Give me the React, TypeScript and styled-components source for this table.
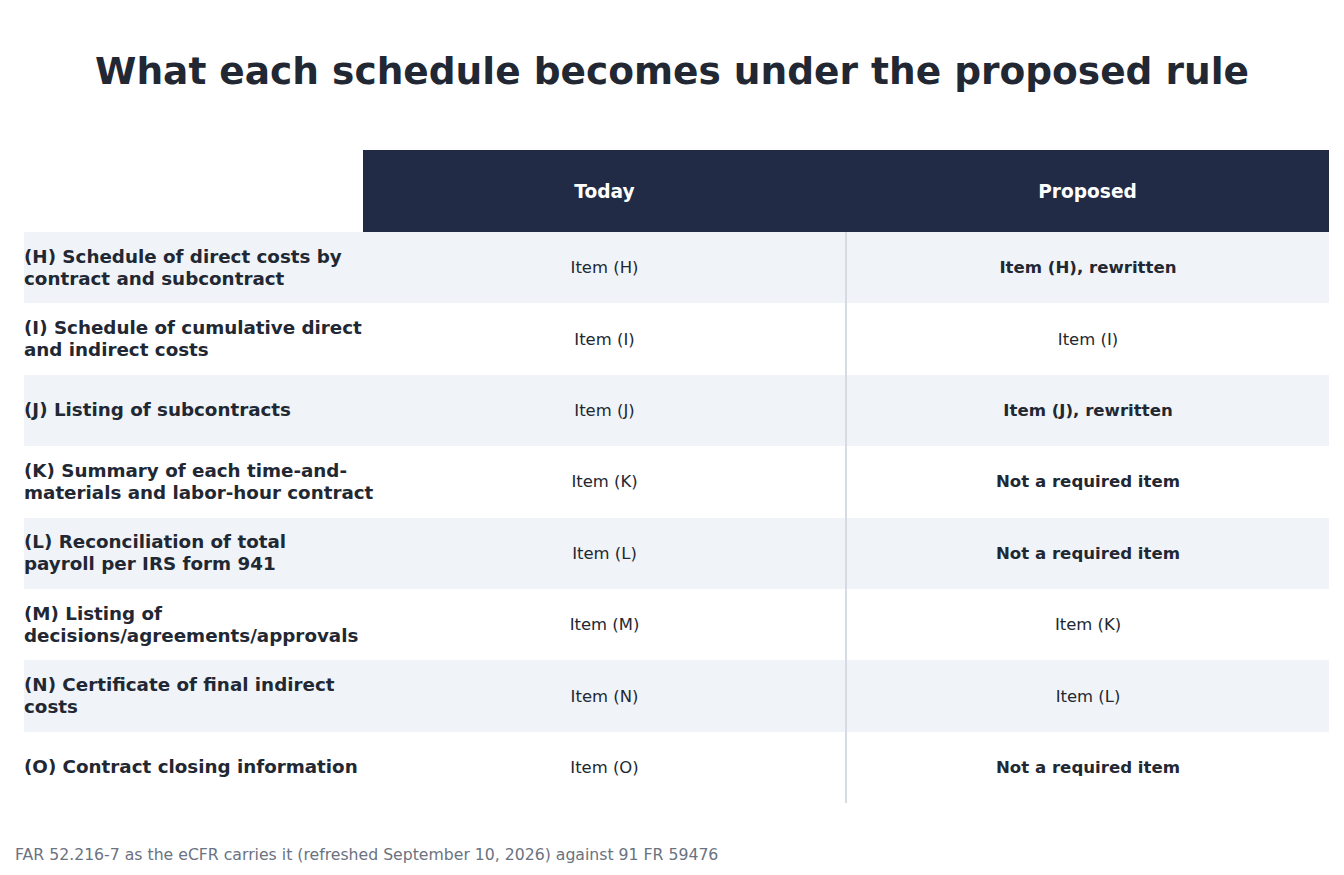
import React from "react";
import styled, { createGlobalStyle } from "styled-components";

const Global = createGlobalStyle`
  html, body { margin: 0; padding: 0; background: #ffffff; }
  body { font-family: "DejaVu Sans", "Noto Sans", sans-serif; color: #222833; }
`;

const Page = styled.div`
  width: 1344px;
  height: 875px;
  box-sizing: border-box;
  display: flex;
  flex-direction: column;
`;

const Title = styled.h1`
  margin: 0;
  height: 142px;
  display: flex;
  align-items: center;
  justify-content: center;
  font-size: 37.5px;
  font-weight: 700;
  color: #222833;
  box-sizing: border-box;
`;

const Table = styled.div`
  margin: 8px 15px 0 24px;
  display: grid;
  grid-template-columns: 339px 483px 483px;
`;

const HeadBlank = styled.div`
  height: 82px;
`;

const HeadCell = styled.div`
  height: 82px;
  background: #212b45;
  color: #ffffff;
  font-size: 18.6px;
  font-weight: 700;
  display: flex;
  align-items: center;
  justify-content: center;
`;

const Row = styled.div<{ $striped: boolean }>`
  grid-column: 1 / -1;
  display: grid;
  grid-template-columns: 339px 483px 483px;
  height: 71.4px;
  background: ${(p) => (p.$striped ? "#f0f4f8" : "#ffffff")};
`;

const Label = styled.div`
  display: flex;
  flex-direction: column;
  justify-content: center;
  font-size: 18.3px;
  font-weight: 700;
  line-height: 22px;
  color: #222833;
  white-space: nowrap;
  position: relative;
  z-index: 1;
`;

const LabelLine = styled.span`
  display: block;
`;

const Cell = styled.div<{ $bold?: boolean; $divider?: boolean }>`
  display: flex;
  align-items: center;
  justify-content: center;
  font-size: ${(p) => (p.$bold ? "16.6px" : "16.45px")};
  font-weight: ${(p) => (p.$bold ? 700 : 400)};
  color: #222833;
  border-left: ${(p) => (p.$divider ? "2px solid #d6dbe3" : "none")};
  margin-left: ${(p) => (p.$divider ? "-1px" : "0")};
`;

const Footer = styled.div`
  margin: 42px 0 0 15px;
  font-size: 15.7px;
  color: #6b7280;
`;

const rows: { label: string[]; today: string; proposed: string; bold: boolean }[] = [
  { label: ["(H) Schedule of direct costs by", "contract and subcontract"], today: "Item (H)", proposed: "Item (H), rewritten", bold: true },
  { label: ["(I) Schedule of cumulative direct", "and indirect costs"], today: "Item (I)", proposed: "Item (I)", bold: false },
  { label: ["(J) Listing of subcontracts"], today: "Item (J)", proposed: "Item (J), rewritten", bold: true },
  { label: ["(K) Summary of each time-and-", "materials and labor-hour contract"], today: "Item (K)", proposed: "Not a required item", bold: true },
  { label: ["(L) Reconciliation of total", "payroll per IRS form 941"], today: "Item (L)", proposed: "Not a required item", bold: true },
  { label: ["(M) Listing of", "decisions/agreements/approvals"], today: "Item (M)", proposed: "Item (K)", bold: false },
  { label: ["(N) Certificate of final indirect", "costs"], today: "Item (N)", proposed: "Item (L)", bold: false },
  { label: ["(O) Contract closing information"], today: "Item (O)", proposed: "Not a required item", bold: true },
];

export default function App() {
  return (
    <Page>
      <Global />
      <Title>What each schedule becomes under the proposed rule</Title>
      <Table>
        <HeadBlank />
        <HeadCell>Today</HeadCell>
        <HeadCell>Proposed</HeadCell>
        {rows.map((r, i) => (
          <Row key={r.today} $striped={i % 2 === 0}>
            <Label>
              {r.label.map((line) => (
                <LabelLine key={line}>{line}</LabelLine>
              ))}
            </Label>
            <Cell>{r.today}</Cell>
            <Cell $bold={r.bold} $divider>
              {r.proposed}
            </Cell>
          </Row>
        ))}
      </Table>
      <Footer>FAR 52.216-7 as the eCFR carries it (refreshed September 10, 2026) against 91 FR 59476</Footer>
    </Page>
  );
}
